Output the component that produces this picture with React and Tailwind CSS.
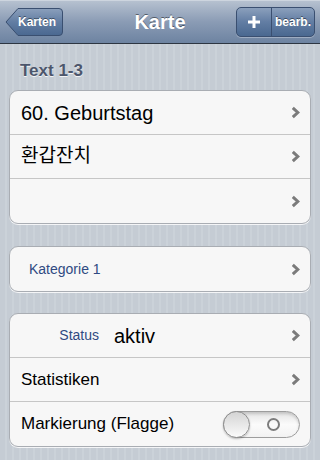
import React from "react";

const font = { fontFamily: '"Liberation Sans", Arial, "Noto Sans CJK KR", sans-serif' };

const Chevron = () => (
  <svg width="9" height="13" viewBox="0 0 9 13" className="shrink-0">
    <path d="M1.8 1.8 L6.8 6.5 L1.8 11.2" fill="none" stroke="#7b7b7b" strokeWidth="3" strokeLinejoin="miter" />
  </svg>
);

const Row = ({ children, last, chevron = true }) => (
  <div
    className={`flex items-center h-[44px] pl-[11px] pr-[10px] ${last ? "" : "border-b border-[#c6c6c6]"}`}
  >
    <div className="flex-1 min-w-0 flex items-center">{children}</div>
    {chevron && <Chevron />}
  </div>
);

const Group = ({ children, className = "" }) => (
  <div
    className={`mx-[9px] rounded-[9px] border border-[#a9adb3] bg-[#f7f7f7] shadow-[0_1px_0_rgba(255,255,255,0.8)] overflow-hidden ${className}`}
  >
    {children}
  </div>
);

const Toggle = () => (
  <div className="relative w-[77px] h-[27px] rounded-full border border-[#9d9d9d] bg-gradient-to-b from-[#e4e4e4] via-[#fbfbfb] to-[#f2f2f2] shadow-[inset_0_2px_3px_rgba(0,0,0,0.15)]">
    <div className="absolute left-[-1px] top-[-1px] w-[27px] h-[27px] rounded-full border border-[#8e8e8e] bg-gradient-to-b from-[#d4d4d4] to-[#fbfbfb] shadow-[0_1px_2px_rgba(0,0,0,0.25)]" />
    <div className="absolute left-[43px] top-[6px] w-[13px] h-[13px] rounded-full border-2 border-[#7d7d7d]" />
  </div>
);

export default function App() {
  return (
    <div
      style={font}
      className="w-[320px] h-[460px] overflow-hidden bg-[repeating-linear-gradient(90deg,#c5ccd4_0px,#c5ccd4_5px,#cbd2d9_5px,#cbd2d9_7px)]"
    >
      {/* nav bar */}
      <div className="relative h-[44px] flex items-center justify-between px-[5px] bg-gradient-to-b from-[#b8c3d1] via-[#8b9cb5] to-[#6d83a1] border-b border-[#2d3642] shadow-[inset_0_1px_0_#cdd5df]">
        <div className="relative w-[59px] h-[30px]">
          <svg width="59" height="30" viewBox="0 0 59 30" className="absolute inset-0">
            <defs>
              <linearGradient id="bk" x1="0" y1="0" x2="0" y2="1">
                <stop offset="0" stopColor="#8ba0bc" />
                <stop offset="0.5" stopColor="#627da3" />
                <stop offset="1" stopColor="#4a6890" />
              </linearGradient>
            </defs>
            <path
              d="M1 15 L13 1.5 L54 1.5 Q57.5 1.5 57.5 5 L57.5 25 Q57.5 28.5 54 28.5 L13 28.5 Z"
              fill="url(#bk)"
              stroke="#3a4f70"
              strokeWidth="1"
            />
          </svg>
          <span className="absolute left-[13px] top-0 h-[30px] flex items-center text-white text-[12px] font-bold [text-shadow:0_-1px_0_rgba(0,0,0,0.45)]">
            Karten
          </span>
        </div>
        <div className="absolute inset-x-0 top-0 h-[43px] flex items-center justify-center pointer-events-none">
          <span className="text-white text-[20px] font-bold [text-shadow:0_-1px_0_rgba(0,0,0,0.45)]">Karte</span>
        </div>
        <div className="flex h-[30px] rounded-[5px] border border-[#3a4f70] overflow-hidden bg-gradient-to-b from-[#8ba0bc] via-[#627da3] to-[#4a6890] shadow-[0_1px_0_rgba(255,255,255,0.3)]">
          <div className="w-[35px] flex items-center justify-center border-r border-[#3a4f70]">
            <svg width="14" height="14" viewBox="0 0 14 14">
              <path d="M7 1 V13 M1 7 H13" stroke="#fff" strokeWidth="3" />
            </svg>
          </div>
          <div className="w-[42px] flex items-center justify-center text-white text-[12px] font-bold [text-shadow:0_-1px_0_rgba(0,0,0,0.45)]">
            bearb.
          </div>
        </div>
      </div>

      {/* content */}
      <div className="pt-[17px]">
        <div className="px-[20px] h-[20px] leading-[20px] text-[17px] font-bold text-[#4c566c] [text-shadow:0_1px_0_rgba(255,255,255,0.8)]">
          Text 1-3
        </div>
        <Group className="mt-[9px]">
          <Row>
            <span className="text-[20px] text-black">60. Geburtstag</span>
          </Row>
          <Row>
            <span className="text-[19px] text-black">환갑잔치</span>
          </Row>
          <Row last>
            <span />
          </Row>
        </Group>

        <Group className="mt-[22px]">
          <Row last>
            <span className="pl-[8px] text-[14px] text-[#2f4a82]">Kategorie 1</span>
          </Row>
        </Group>

        <Group className="mt-[21px]">
          <Row>
            <span className="w-[78px] text-right text-[14px] text-[#2f4a82]">Status</span>
            <span className="ml-[15px] text-[20px] text-black">aktiv</span>
          </Row>
          <Row>
            <span className="text-[17px] text-black">Statistiken</span>
          </Row>
          <Row last chevron={false}>
            <span className="flex-1 text-[17px] text-black">Markierung (Flagge)</span>
            <Toggle />
          </Row>
        </Group>
      </div>
    </div>
  );
}
